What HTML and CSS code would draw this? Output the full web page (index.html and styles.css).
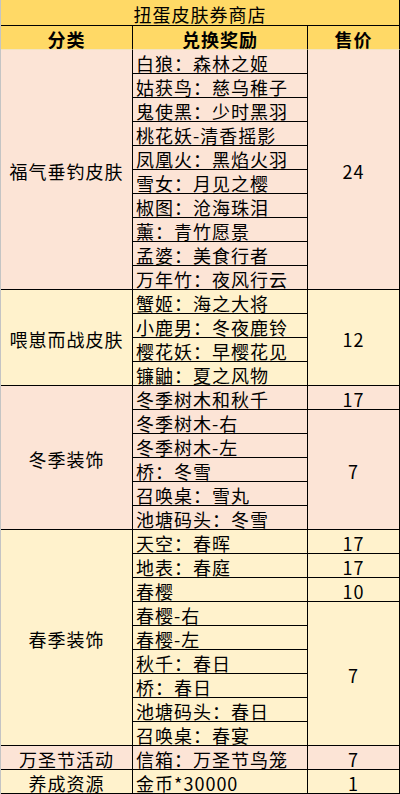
FILE: index.html
```html
<!DOCTYPE html>
<html lang="zh-CN">
<head>
<meta charset="utf-8">
<title>扭蛋皮肤券商店</title>
<link rel="stylesheet" href="styles.css">
</head>
<body>
<div class="sheet">
  <div class="cell title">扭蛋皮肤券商店</div>
  <div class="cell head">分类</div>
  <div class="cell head">兑换奖励</div>
  <div class="cell head">售价</div>

  <div class="cell cat pink span10">福气垂钓皮肤</div>
  <div class="cell item pink">白狼：森林之姬</div>
  <div class="cell price pink span10">24</div>
  <div class="cell item pink">姑获鸟：慈乌稚子</div>
  <div class="cell item pink">鬼使黑：少时黑羽</div>
  <div class="cell item pink">桃花妖-清香摇影</div>
  <div class="cell item pink">凤凰火：黑焰火羽</div>
  <div class="cell item pink">雪女：月见之樱</div>
  <div class="cell item pink">椒图：沧海珠泪</div>
  <div class="cell item pink">薰：青竹愿景</div>
  <div class="cell item pink">孟婆：美食行者</div>
  <div class="cell item pink">万年竹：夜风行云</div>

  <div class="cell cat cream span4">喂崽而战皮肤</div>
  <div class="cell item cream">蟹姬：海之大将</div>
  <div class="cell price cream span4">12</div>
  <div class="cell item cream">小鹿男：冬夜鹿铃</div>
  <div class="cell item cream">樱花妖：早樱花见</div>
  <div class="cell item cream">镰鼬：夏之风物</div>

  <div class="cell cat pink span6">冬季装饰</div>
  <div class="cell item pink">冬季树木和秋千</div>
  <div class="cell price pink">17</div>
  <div class="cell item pink">冬季树木-右</div>
  <div class="cell price pink span5">7</div>
  <div class="cell item pink">冬季树木-左</div>
  <div class="cell item pink">桥：冬雪</div>
  <div class="cell item pink">召唤桌：雪丸</div>
  <div class="cell item pink">池塘码头：冬雪</div>

  <div class="cell cat cream span9">春季装饰</div>
  <div class="cell item cream">天空：春晖</div>
  <div class="cell price cream">17</div>
  <div class="cell item cream">地表：春庭</div>
  <div class="cell price cream">17</div>
  <div class="cell item cream">春樱</div>
  <div class="cell price cream">10</div>
  <div class="cell item cream">春樱-右</div>
  <div class="cell price cream span6">7</div>
  <div class="cell item cream">春樱-左</div>
  <div class="cell item cream">秋千：春日</div>
  <div class="cell item cream">桥：春日</div>
  <div class="cell item cream">池塘码头：春日</div>
  <div class="cell item cream">召唤桌：春宴</div>

  <div class="cell cat pink">万圣节活动</div>
  <div class="cell item pink">信箱：万圣节鸟笼</div>
  <div class="cell price pink">7</div>

  <div class="cell cat cream">养成资源</div>
  <div class="cell item cream">金币*30000</div>
  <div class="cell price cream">1</div>
</div>
</body>
</html>
```

FILE: styles.css
```css
html, body {
  margin: 0;
  padding: 0;
  background: #ffffff;
}

.sheet {
  display: grid;
  grid-template-columns: 132px 175px 92px;
  grid-template-rows: 26px 24px;
  grid-auto-rows: 24px;
  width: 399px;
  border-left: 1px solid #c4c4c4;
  font-family: "Noto Sans CJK SC", "Noto Sans", sans-serif;
  font-size: 18px;
  letter-spacing: 1px;
  color: #000000;
}

.cell {
  box-sizing: border-box;
  display: flex;
  align-items: center;
  justify-content: center;
  border-right: 1px solid #000000;
  border-bottom: 1px solid #000000;
  white-space: nowrap;
  overflow: hidden;
  line-height: 1;
  padding-top: 2px;
}

.title {
  grid-column: 1 / -1;
  background: #ffd966;
}

.head {
  background: #ffd966;
  font-weight: bold;
  border-bottom-color: #f3e3c0;
}

.pink {
  background: #fce4d6;
}

.cream {
  background: #fff2cc;
}

.item {
  justify-content: flex-start;
  padding-left: 3px;
}

.span4 { grid-row: span 4; }
.span5 { grid-row: span 5; }
.span6 { grid-row: span 6; }
.span9 { grid-row: span 9; }
.span10 { grid-row: span 10; }
```
